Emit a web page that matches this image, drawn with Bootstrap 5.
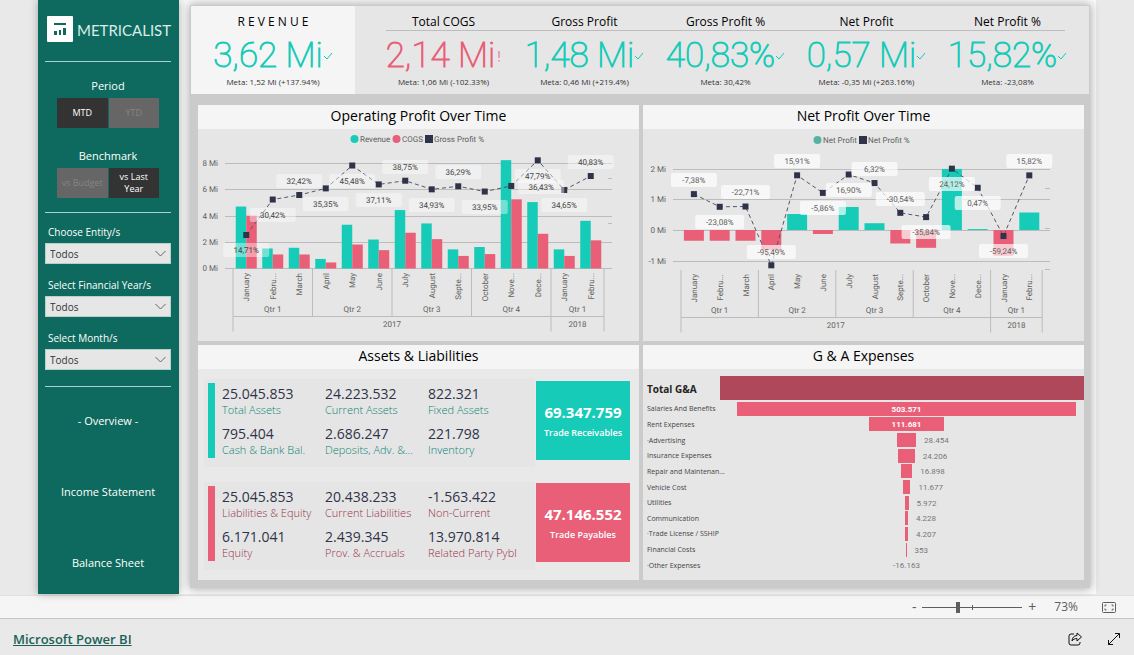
<!DOCTYPE html>
<html lang="en">
<head>
<meta charset="utf-8">
<meta name="viewport" content="width=device-width, initial-scale=1">
<title>Metricalist - Overview</title>
<link rel="stylesheet" href="https://cdn.jsdelivr.net/npm/bootstrap@5.3.0/dist/css/bootstrap.min.css">
<style>
  :root { --teal:#16cbb8; --rose:#e95f78; --wine:#ae485a; --forest:#0e6a5e; --ink:#2f3349; --grey:#605e5c; }
  body { background:#e9e9e9; font-family:"Open Sans","Noto Sans",sans-serif; font-size:12px; line-height:16px; color:#000; }
  .stage { padding:0 38px; }
  .canvas { background:#fafafa; margin-bottom:1px; }
  .side { width:141px; background:var(--forest); color:#fff; padding:16px 8px 0 7px; box-shadow:0 0 8px rgba(0,0,0,.3); z-index:1; }
  .side hr { margin:0; border-top:1px solid #a5d3cb; opacity:1; }
  .brand { padding-left:2px; margin-bottom:17px; }
  .brand-name { font-family:Lato,sans-serif; font-weight:400; font-size:15px; line-height:28px; margin-left:4px; color:#dcecea; }
  .side-head { font-size:11px; line-height:16px; text-align:center; margin-bottom:4px; }
  .toggles { display:grid; grid-template-columns:repeat(2,minmax(0,1fr)); padding:0 12px; gap:1px; }
  .toggles-gap { margin-bottom:20px; }
  .toggles-end { margin-bottom:14px; }
  .toggle { background:#666; color:#858585; font-size:9px; line-height:12px; height:30px; border:0; border-radius:0; padding:0; }
  .toggle.active { background:#333; color:#fff; padding:0 10px; }
  .filters { padding:12px 0 16px; gap:14px; }
  .side-label { display:block; font-size:10px; line-height:14px; color:#fff; margin:0 0 4px 3px; }
  .side .form-select { height:21px; font-size:10px; line-height:14px; padding:2px 20px 2px 4px; border:1px solid #b5d1cc; border-radius:0; background-color:#e6e6e6; color:#333; background-size:11px 11px; background-position:right 4px center;
    background-image:url("data:image/svg+xml,%3Csvg xmlns='http://www.w3.org/2000/svg' viewBox='0 0 11 11'%3E%3Cpath fill='none' stroke='%23666' d='M.5 3l5 5 5-5'/%3E%3C/svg%3E"); }
  .side-nav { margin-top:26px; gap:55px; }
  .side-nav a { color:#fff; font-size:11px; line-height:16px; text-align:center; text-decoration:none; }

  .main-col { padding:5px 6px 6px 11px; min-width:0; }
  .board { background:#cbcbcb; padding:1px; box-shadow:0 0 9px 1px rgba(0,0,0,.3); }
  .kpi-strip { background:#e6e6e6; height:88px; }
  .kpi-main { background:#f5f5f5; width:164px; padding:8px 0 0; text-align:center; }
  .kpi-grid { display:grid; grid-template-columns:repeat(5,minmax(0,1fr)); padding:8px 11px 0 18px; text-align:center; align-content:start; }
  .kpi-grid hr { grid-column:1/-1; margin:0 13px; border-top:1px solid #bdbdbd; opacity:1; }
  .kpi-title { font-size:12px; line-height:16px; }
  .kpi-main .kpi-title { margin-bottom:1px; }
  .kpi-value { font-family:Roboto,sans-serif; font-weight:100; -webkit-text-stroke:1px currentColor; font-size:35px; line-height:46px; height:46px; padding-top:3px; color:var(--teal); display:flex; justify-content:center; align-items:center; white-space:nowrap; }
  .kpi-value svg { flex:none; }
  .kpi-value.bad { color:var(--rose); }
  .kpi-meta { font-size:8px; line-height:10px; color:#333; }

  .tiles { display:grid; grid-template-columns:repeat(2,minmax(0,1fr)); gap:4px; padding:11px 5px 7px 7px; }
  .tile { background:#e6e6e6; }
  .tile h2 { margin:0; background:#f5f5f5; font-size:14px; line-height:22px; height:24px; font-weight:400; text-align:center; }
  .tile svg.plot { display:block; width:100%; height:auto; font-family:Roboto,sans-serif; font-size:8px; fill:var(--grey); text-rendering:geometricPrecision; }

  .bal { background:#e9e9e9; padding:10px 9px 10px 6px; }
  .bal-row { height:88px; }
  .bal-row + .bal-row { margin-top:15px; }
  .bal-left { background:#e5e5e5; padding:4px 0 0 4px; min-width:0; }
  .stripe { width:7px; height:75px; background:var(--teal); flex:none; }
  .figures { display:grid; grid-template-columns:repeat(3,minmax(0,1fr)); align-content:start; margin:0 4px 0 7px; flex:1 1 auto; min-width:0; }
  .figure-item { height:40px; }
  .fig-num { font-size:14px; line-height:21px; color:var(--ink); }
  .fig-lab { font-size:11px; line-height:12px; color:#0a8473; font-weight:300; white-space:nowrap; }
  .total { width:94px; height:79px; background:var(--teal); color:#fff; margin:2px 0 0 1px; flex:none; padding-top:5px; }
  .total-num { font-size:15px; line-height:20px; font-weight:700; }
  .total-lab { font-size:9px; line-height:22px; font-weight:600; }
  .owed .stripe, .owed .total { background:var(--rose); }
  .owed .total { margin-top:1px; }
  .owed .fig-lab { color:#98304a; }

  .funnel { padding:7px 0 6px; height:211px; }
  .f-head { margin-bottom:1px; }
  .f-label { width:86px; padding-left:4px; font-size:7px; line-height:13px; color:#444; white-space:nowrap; flex:none; }
  .f-head .f-label { width:77px; font-size:10px; font-weight:700; color:#252423; padding-top:3px; }
  .f-head .f-bar { height:24px; background:var(--wine); }
  .f-bar { background:var(--rose); height:14px; color:#fff; font-family:Roboto,sans-serif; font-size:8px; line-height:15px; font-weight:700; text-align:center; }
  .f-out { color:#777; font-weight:400; padding-left:8px; }
  .f-neg { color:#777; font-family:Roboto,sans-serif; font-size:8px; line-height:15px; }

  .zoombar { background:#f5f5f5; border-top:1px solid #e1e1e1; border-bottom:1px solid #c6c6c6; height:24px; color:var(--grey); padding-right:18px; }
  .zoombar button, .foot button { background:none; border:0; padding:0; color:inherit; display:flex; align-items:center; justify-content:center; }
  .zoombar .step-btn { width:12px; font-size:14px; line-height:20px; }
  .zoom-track { width:100px; height:12px; margin:0 4px 0 2px; }
  .zoom-range { -webkit-appearance:none; appearance:none; display:block; width:100%; height:12px; margin:0; background:linear-gradient(var(--grey),var(--grey)) center/100% 1px no-repeat, linear-gradient(var(--grey),var(--grey)) 50% 50%/1px 5px no-repeat; }
  .zoom-range::-webkit-slider-thumb { -webkit-appearance:none; width:4px; height:11px; background:var(--grey); border:0; border-radius:0; }
  .foot { height:36px; padding:3px 13px 0; }
  .foot a { color:#1b6158; font-size:13px; line-height:20px; font-weight:600; }
</style>
</head>
<body>
<div class="stage">
  <div class="canvas d-flex">
    <aside class="side d-flex flex-column position-relative flex-shrink-0">
      <div class="brand d-flex">
        <svg width="26" height="26" viewBox="0 0 26 26" aria-hidden="true" class="flex-shrink-0"><rect width="26" height="26" rx="1" fill="#fff"/><path fill="#0e6a5e" d="M7 7h12v2H7zM7 15h3v4H7zM12 14h2v5H12zM16 12h3v7h-3z"/></svg>
        <span class="brand-name">METRICALIST</span>
      </div>
      <hr>
      <div class="side-head mt-3">Period</div>
      <div class="toggles toggles-gap" role="group" aria-label="Period">
        <button type="button" class="toggle active">MTD</button><button type="button" class="toggle">YTD</button>
      </div>
      <div class="side-head">Benchmark</div>
      <div class="toggles toggles-end" role="group" aria-label="Benchmark">
        <button type="button" class="toggle">vs Budget</button><button type="button" class="toggle active">vs Last Year</button>
      </div>
      <hr>
      <div class="filters d-flex flex-column">
        <div><label class="side-label" for="entity">Choose Entity/s</label><select id="entity" class="form-select"><option>Todos</option></select></div>
        <div><label class="side-label" for="year">Select Financial Year/s</label><select id="year" class="form-select"><option>Todos</option></select></div>
        <div><label class="side-label" for="month">Select Month/s</label><select id="month" class="form-select"><option>Todos</option></select></div>
      </div>
      <hr>
      <nav class="side-nav d-flex flex-column">
        <a href="#overview">- Overview -</a><a href="#income">Income Statement</a><a href="#balance">Balance Sheet</a>
      </nav>
    </aside>

    <main class="main-col flex-fill">
      <div class="board">
        <section class="kpi-strip d-flex">
          <div class="kpi-main flex-shrink-0">
            <div class="kpi-title">R E V E N U E</div>
            <div class="kpi-value">3,62 Mi<svg width="10" height="8" viewBox="0 0 10 8"><path d="M1 4l3 3 5-6" fill="none" stroke="currentColor"/></svg></div>
            <div class="kpi-meta">Meta: 1,52 Mi (+137.94%)</div>
          </div>
          <div class="kpi-grid flex-fill" id="kpis"></div>
        </section>

        <div class="tiles">
          <section class="tile"><h2>Operating Profit Over Time</h2><svg class="plot" id="opChart" viewBox="0 0 441 212" role="img" aria-label="Operating Profit Over Time"></svg></section>
          <section class="tile"><h2>Net Profit Over Time</h2><svg class="plot" id="netChart" viewBox="0 0 441 212" role="img" aria-label="Net Profit Over Time"></svg></section>
          <section class="tile">
            <h2>Assets &amp; Liabilities</h2>
            <div class="bal">
              <div class="bal-row d-flex">
                <div class="bal-left d-flex flex-fill"><div class="stripe"></div>
                  <div class="figures">
                    <div class="figure-item"><div class="fig-num">25.045.853</div><div class="fig-lab">Total Assets</div></div>
                    <div class="figure-item"><div class="fig-num">24.223.532</div><div class="fig-lab">Current Assets</div></div>
                    <div class="figure-item"><div class="fig-num">822.321</div><div class="fig-lab">Fixed Assets</div></div>
                    <div class="figure-item"><div class="fig-num">795.404</div><div class="fig-lab">Cash &amp; Bank Bal.</div></div>
                    <div class="figure-item"><div class="fig-num">2.686.247</div><div class="fig-lab">Deposits, Adv. &amp;...</div></div>
                    <div class="figure-item"><div class="fig-num">221.798</div><div class="fig-lab">Inventory</div></div>
                  </div>
                </div>
                <div class="total d-flex flex-column align-items-center justify-content-center"><div class="total-num">69.347.759</div><div class="total-lab">Trade Receivables</div></div>
              </div>
              <div class="bal-row owed d-flex">
                <div class="bal-left d-flex flex-fill"><div class="stripe"></div>
                  <div class="figures">
                    <div class="figure-item"><div class="fig-num">25.045.853</div><div class="fig-lab">Liabilities &amp; Equity</div></div>
                    <div class="figure-item"><div class="fig-num">20.438.233</div><div class="fig-lab">Current Liabilities</div></div>
                    <div class="figure-item"><div class="fig-num">-1.563.422</div><div class="fig-lab">Non-Current</div></div>
                    <div class="figure-item"><div class="fig-num">6.171.041</div><div class="fig-lab">Equity</div></div>
                    <div class="figure-item"><div class="fig-num">2.439.345</div><div class="fig-lab">Prov. &amp; Accruals</div></div>
                    <div class="figure-item"><div class="fig-num">13.970.814</div><div class="fig-lab">Related Party Pybl</div></div>
                  </div>
                </div>
                <div class="total d-flex flex-column align-items-center justify-content-center"><div class="total-num">47.146.552</div><div class="total-lab">Trade Payables</div></div>
              </div>
            </div>
          </section>
          <section class="tile">
            <h2>G &amp; A Expenses</h2>
            <div class="funnel d-flex flex-column" id="funnel">
              <div class="f-head d-flex align-items-center"><div class="f-label">Total G&amp;A</div><div class="f-bar flex-fill"></div></div>
            </div>
          </section>
        </div>
      </div>
    </main>
  </div>
</div>

<div class="zoombar d-flex align-items-center justify-content-end">
  <button type="button" class="step-btn" aria-label="Zoom out">-</button>
  <div class="zoom-track"><input type="range" class="zoom-range" min="10" max="190" value="73" aria-label="Zoom"></div>
  <button type="button" class="step-btn" aria-label="Zoom in">+</button>
  <span class="ms-3 me-4">73%</span>
  <button type="button" aria-label="Fit to page"><svg width="14" height="11" viewBox="0 0 14 11" fill="none" stroke="currentColor"><rect x=".5" y=".5" width="13" height="10" rx="1"/><path d="M3 4.500V3h1.500M9.500 3H11v1.500M11 6.500V8H9.500M4.500 8H3V6.500"/></svg></button>
</div>
<footer class="foot d-flex align-items-center">
  <a href="#powerbi" class="me-auto">Microsoft Power BI</a>
  <button type="button" aria-label="Share" class="me-4"><svg width="15" height="14" viewBox="0 0 15 14" fill="none" stroke="#111"><path d="M6 2H3a2 2 0 0 0-2 2v7a2 2 0 0 0 2 2h7a2 2 0 0 0 2-2v-1"/><path d="M9 1l4.500 4L9 9V6.500C6.500 6.500 5 7.500 4 9c0-3 2-5.500 5-5.500z" stroke-linejoin="round"/></svg></button>
  <button type="button" aria-label="Full screen"><svg width="14" height="14" viewBox="0 0 14 14" fill="none" stroke="#111"><path d="M1.500 12.500l11-11M8 1.500h4.500V6M1.500 8v4.500H6"/></svg></button>
</footer>

<script src="https://cdn.jsdelivr.net/npm/bootstrap@5.3.0/dist/js/bootstrap.bundle.min.js"></script>
<script>
  const months = ['January','Febru...','March','April','May','June','July','August','Septe...','October','Nove...','Dece...','January','Febru...'];
  const TEAL = '#16cbb8', ROSE = '#e95f78', INK = '#2f3349', GRID = '#bcbcbc';
  const rect = (x, y, w, h, fill, extra = '') => `<rect x="${x}" y="${y}" width="${w}" height="${h}" fill="${fill}" ${extra}/>`;
  const line = (x1, y1, x2, y2) => `<path d="M${x1} ${y1}L${x2} ${y2}" stroke="${GRID}" stroke-width="1"/>`;
  const text = (x, y, s, anchor = 'middle', extra = '') => `<text x="${x}" y="${y}" text-anchor="${anchor}" ${extra}>${s}</text>`;

  /* KPI strip */
  const tick = '<svg width="10" height="8" viewBox="0 0 10 8"><path d="M1 4l3 3 5-6" fill="none" stroke="currentColor"/></svg>';
  const bang = '<svg width="6" height="12" viewBox="0 0 6 12"><path d="M4 1v7M4 10v1.500" fill="none" stroke="currentColor"/></svg>';
  const kpis = [
    ['Total COGS', '2,14 Mi', 'Meta: 1,06 Mi (-102.33%)', true],
    ['Gross Profit', '1,48 Mi', 'Meta: 0,46 Mi (+219.4%)'],
    ['Gross Profit %', '40,83%', 'Meta: 30,42%'],
    ['Net Profit', '0,57 Mi', 'Meta: -0,35 Mi (+263.16%)'],
    ['Net Profit %', '15,82%', 'Meta: -23,08%']
  ];
  document.getElementById('kpis').innerHTML =
    kpis.map(k => `<div class="kpi-title">${k[0]}</div>`).join('') + '<hr>' +
    kpis.map(k => `<div><div class="kpi-value${k[3] ? ' bad' : ''}">${k[1]}${k[3] ? bang : tick}</div><div class="kpi-meta">${k[2]}</div></div>`).join('');

  /* Shared category axis: months, quarters and years */
  function axis(c) {
    let s = '';
    months.forEach((m, i) => {
      const x = c.x0 + c.step * (i + .5) + 3;
      s += text(x, c.monthY, m, 'end', `transform="rotate(-90 ${x} ${c.monthY})"`);
    });
    [0, 3, 6, 9, 12, 14].forEach(n => {
      const x = c.x0 + c.step * n;
      s += line(x, c.axisY, x, n === 0 || n > 9 ? c.yearY + 15 : c.yearY);
    });
    s += line(c.x0, c.yearY, c.x0 + c.step * 14, c.yearY);
    [[1.5, 'Qtr 1'], [4.5, 'Qtr 2'], [7.5, 'Qtr 3'], [10.5, 'Qtr 4'], [13, 'Qtr 1']].forEach(q => s += text(c.x0 + c.step * q[0], c.yearY - 5, q[1]));
    return s + text(c.x0 + c.step * 6, c.yearY + 10, '2017') + text(c.x0 + c.step * 13, c.yearY + 10, '2018');
  }

  function trend(c, pts) {
    const xy = pts.map((p, i) => [c.x0 + c.step * (i + .5), c.pctY(p[0])]);
    let s = `<path d="M${xy.map(p => p.join(' ')).join('L')}" fill="none" stroke="#55576a" stroke-dasharray="4 3"/>`;
    xy.forEach(p => s += rect(p[0] - 3, p[1] - 3, 6, 6, INK));
    pts.forEach((p, i) => {
      const w = p[0] < -9 ? c.wide : c.narrow, x = xy[i][0] + (p[2] || 0);
      s += rect(x - w / 2, p[1] - 7, w, 14, '#fff', `rx="2" fill-opacity="${c.veil}"`);
      s += text(x, p[1] + 3, p[0].toFixed(2).replace('.', ',') + '%', 'middle', `fill="${c.ink}"`);
    });
    return s;
  }

  /* Revenue and COGS in millions, gross profit in percent */
  const revenue = [4.73,1.53,1.58,.73,3.34,2.21,4.46,3.44,1.46,1.64,8.27,5.07,1.46,3.64];
  const cogs = [4.03,1.07,1.07,.46,1.83,1.4,2.73,2.24,.96,1.1,5.28,2.65,.96,2.15];
  const gross = [[14.71,121],[30.42,86],[32.42,52],[35.35,75],[45.48,52],[37.11,71],[38.75,38],[34.93,76],[36.29,43],[33.95,78],[36.43,58,30],[47.79,47],[34.65,76],[40.83,33]];
  {
    const c = { x0:35, step:26.5, monthY:144, axisY:139, yearY:187.5, wide:46, narrow:46, veil:.4, ink:'#444', pctY: p => 106 - (p - 14.71) * 2.258 };
    let s = '<circle cx="156.500" cy="10" r="4" fill="#16cbb8"/>' + text(162, 13, 'Revenue', 'start') +
      '<circle cx="198.500" cy="10" r="4" fill="#e95f78"/>' + text(204, 13, 'COGS', 'start') + rect(227, 6, 8, 8, INK) + text(236, 13, 'Gross Profit %', 'start');
    [0, 2, 4, 6, 8].forEach(v => { const y = Math.round(139 - v * 13.1) + .5; s += line(27, y, 414, y) + text(20, y + 2, v + ' Mi', 'end'); });
    [49.5, 94.5].forEach(y => s += line(410, y, 414, y));
    months.forEach((m, i) => {
      const x = c.x0 + c.step * (i + .5);
      s += rect(x - 10.5, 139.5 - revenue[i] * 13.1, 10.5, revenue[i] * 13.1, TEAL) + rect(x, 139.5 - cogs[i] * 13.1, 10.5, cogs[i] * 13.1, ROSE);
    });
    document.getElementById('opChart').innerHTML = s + axis(c) + trend(c, gross);
  }

  /* Net profit in millions and in percent */
  const net = [-.35,-.35,-.35,-.66,.52,-.13,.75,.22,-.44,-.58,1.99,.03,-.84,.57];
  const netPct = [[-7.38,51],[-23.08,93],[-22.71,63],[-95.49,123],[15.91,32],[-5.86,79],[16.9,61],[6.32,40],[-30.54,70],[-35.84,103],[24.12,55],[.47,74],[-59.24,122],[15.82,32]];
  {
    const c = { x0:38, step:25.8, monthY:145, axisY:141, yearY:188.5, wide:49, narrow:46, veil:.68, ink:'#605e5c', pctY: p => 46.3 - (p - 15.91) * .808 };
    let s = '<circle cx="174.500" cy="11" r="4" fill="#55b3a4"/>' + text(180, 14, 'Net Profit', 'start') + rect(216, 7, 8, 8, INK) + text(225, 14, 'Net Profit %', 'start');
    [-1, 0, 1, 2].forEach(v => { const y = Math.round(101 - v * 30.7) + .5; s += line(30, y, 407, y) + text(23, y + 2, v + ' Mi', 'end'); });
    [59.5, 99.5, 140.5].forEach(y => s += line(402, y, 407, y));
    net.forEach((v, i) => s += rect(c.x0 + c.step * (i + .5) - 10, v > 0 ? 101 - v * 30.7 : 101, 20, Math.abs(v) * 30.7, v > 0 ? TEAL : ROSE));
    document.getElementById('netChart').innerHTML = s + axis(c) + trend(c, netPct);
  }

  /* Expense funnel: each bar is a share of the plot width */
  const expenses = [['Salaries And Benefits',503571],['Rent Expenses',111681],['·Advertising',28454],['Insurance Expenses',24206],['Repair and Maintenan...',16898],['Vehicle Cost',11677],['Utilities',5972],['Communication',4228],['·Trade License / SSHIP',4207],['Financial Costs',353],['·Other Expenses',-16163]];
  document.getElementById('funnel').insertAdjacentHTML('beforeend', expenses.map(([name, v]) => {
    const n = String(v).replace(/(\d)(?=\d{3}$)/, '$1.');
    const mark = v < 0 ? `<span class="f-neg">${n}</span>`
      : `<div class="f-bar position-relative" style="width:${(v / 503571 * 95.6).toFixed(2)}%">${v > 1e5 ? n : `<span class="f-out position-absolute top-0 start-100">${n}</span>`}</div>`;
    return `<div class="d-flex align-items-center flex-fill"><div class="f-label">${name}</div><div class="d-flex justify-content-center flex-fill">${mark}</div></div>`;
  }).join(''));
</script>
</body>
</html>
